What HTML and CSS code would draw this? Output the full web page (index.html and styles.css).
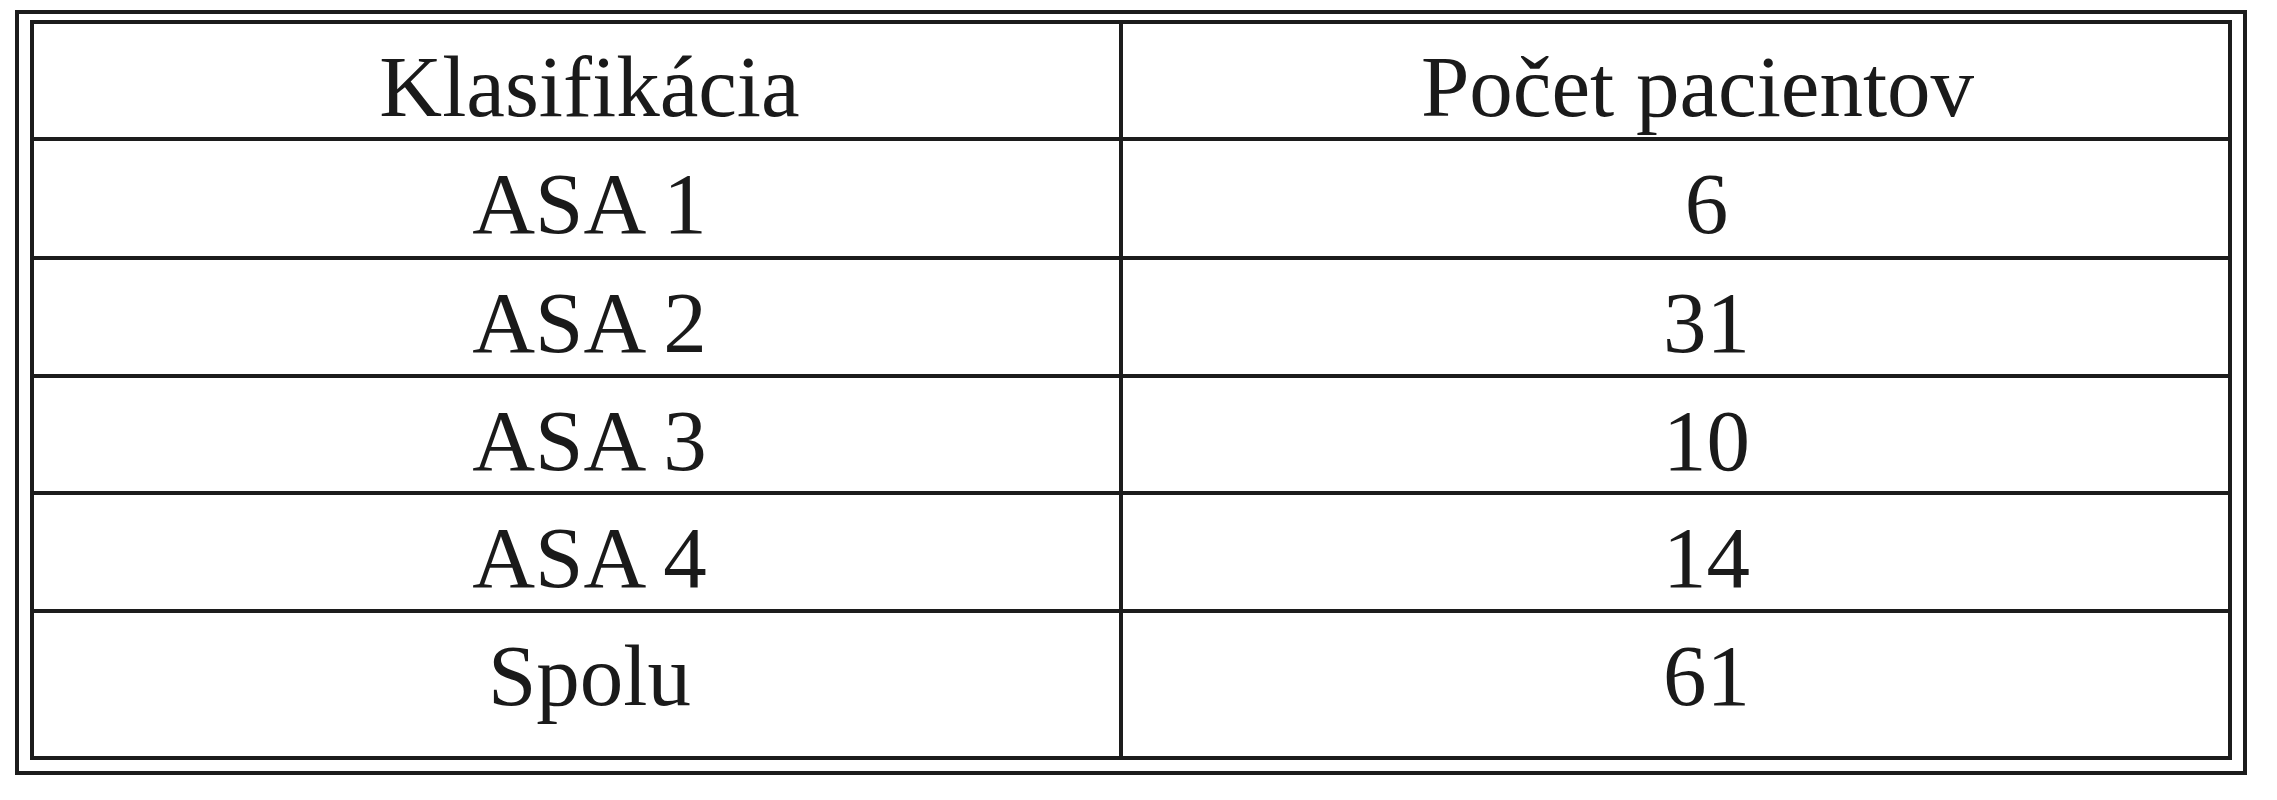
FILE: index.html
```html
<!DOCTYPE html>
<html lang="sk">
<head>
<meta charset="utf-8">
<title>Klasifikácia ASA</title>
<link rel="stylesheet" href="styles.css">
</head>
<body>
<div class="frame">
  <div class="table">
    <div class="cell head left">Klasifikácia</div>
    <div class="cell head right">Počet pacientov</div>
    <div class="cell left">ASA 1</div>
    <div class="cell right">6</div>
    <div class="cell left">ASA 2</div>
    <div class="cell right">31</div>
    <div class="cell left">ASA 3</div>
    <div class="cell right">10</div>
    <div class="cell left">ASA 4</div>
    <div class="cell right">14</div>
    <div class="cell left">Spolu</div>
    <div class="cell right">61</div>
  </div>
</div>
</body>
</html>
```

FILE: styles.css
```css
html, body {
  margin: 0;
  padding: 0;
  background: #ffffff;
}

body {
  padding: 10px 0 0 15px;
  font-family: "Liberation Serif", "Times New Roman", serif;
  color: #1a1a1a;
}

.frame {
  box-sizing: border-box;
  width: 2232px;
  height: 765px;
  border: 4px solid #1c1c1c;
  padding: 6px 11px 11px 11px;
}

.table {
  box-sizing: border-box;
  width: 2202px;
  height: 740px;
  border: 4px solid #1c1c1c;
  background: #1c1c1c;
  display: grid;
  grid-template-columns: 1085px 1105px;
  grid-template-rows: 113px 115px 114px 113px 114px 143px;
  gap: 4px;
}

.cell {
  background: #ffffff;
  font-size: 87px;
  line-height: 87px;
  padding-top: 19px;
  text-align: center;
  box-sizing: border-box;
}

.left {
  padding-left: 26px;
}

.right {
  padding-left: 62px;
}

.head.right {
  padding-left: 44px;
}
```
